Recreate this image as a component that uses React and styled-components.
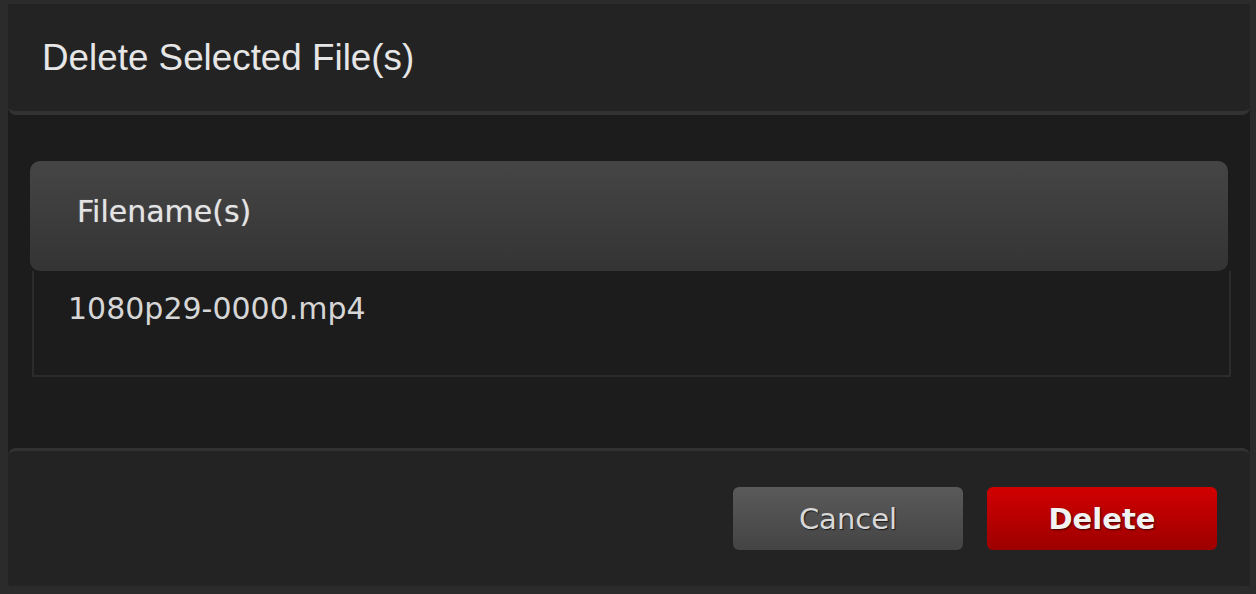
import React from 'react';
import styled, {createGlobalStyle, css} from 'styled-components';

const GlobalStyle = createGlobalStyle`
    html, body {
        margin: 0;
        padding: 0;
        background: #2b2b2b;
    }
`

const Frame = styled.div`
    width: 1256px;
    height: 594px;
    box-sizing: border-box;
    padding: 4px 6px 8px 8px;
    background: #2b2b2b;
`

const Dialog = styled.div`
    height: 100%;
    display: flex;
    flex-direction: column;
    background: #1c1c1c;
    border-radius: 4px;
    overflow: hidden;
    font-family: "DejaVu Sans", Verdana, sans-serif;
    color: #dedede;
`

const Header = styled.div`
    height: 107px;
    flex: none;
    display: flex;
    align-items: center;
    padding-left: 34px;
    background: #232323;
    border-bottom: 4px solid #323232;
    border-radius: 0 0 8px 8px;
`

const Title = styled.h1`
    margin: 0;
    font-family: "Liberation Sans", Arial, sans-serif;
    font-size: 36.8px;
    font-weight: 400;
    color: #e6e6e6;
`

const Body = styled.div`
    flex: 1;
    padding: 46px 22px 0 22px;
`

const TableHead = styled.div`
    height: 110px;
    box-sizing: border-box;
    display: flex;
    align-items: center;
    padding: 0 0 10px 47px;
    border-radius: 10px;
    background: linear-gradient(to bottom, #454545, #343434);
    font-size: 30px;
    color: #e4e4e4;
    text-shadow: 0 0 1px rgba(255, 255, 255, 0.45);
`

const Row = styled.div`
    height: 106px;
    margin: 0 -3px 0 2px;
    box-sizing: border-box;
    padding: 20px 0 0 34px;
    border: 2px solid #2c2c2c;
    border-top: none;
    border-radius: 0 0 2px 2px;
    font-size: 30px;
    line-height: 36px;
    color: #d6d6d6;
`

const Footer = styled.div`
    height: 135px;
    flex: none;
    display: flex;
    align-items: center;
    justify-content: flex-end;
    gap: 24px;
    padding-right: 33px;
    background: #232323;
    border-top: 3px solid #323232;
    border-radius: 8px 8px 0 0;
`

const Button = styled.button`
    width: 230px;
    height: 63px;
    border: none;
    border-radius: 6px;
    font-family: "DejaVu Sans", Verdana, sans-serif;
    font-size: 29px;
    color: #d8d8d8;
    background: linear-gradient(to bottom, #5a5a5a, #444);
    text-shadow: 1px 1px 1px #1a1a1a;
    cursor: pointer;

    ${props => props.danger && css`
        font-weight: 700;
        color: #f2f2f2;
        background: linear-gradient(to bottom, #d20000, #9c0000);
        text-shadow: 1px 1px 2px #3a0000;
    `}
`

export default function App() {
    return (
        <Frame>
            <GlobalStyle/>
            <Dialog>
                <Header>
                    <Title>Delete Selected File(s)</Title>
                </Header>
                <Body>
                    <TableHead>Filename(s)</TableHead>
                    <Row>1080p29-0000.mp4</Row>
                </Body>
                <Footer>
                    <Button>Cancel</Button>
                    <Button danger>Delete</Button>
                </Footer>
            </Dialog>
        </Frame>
    );
}
